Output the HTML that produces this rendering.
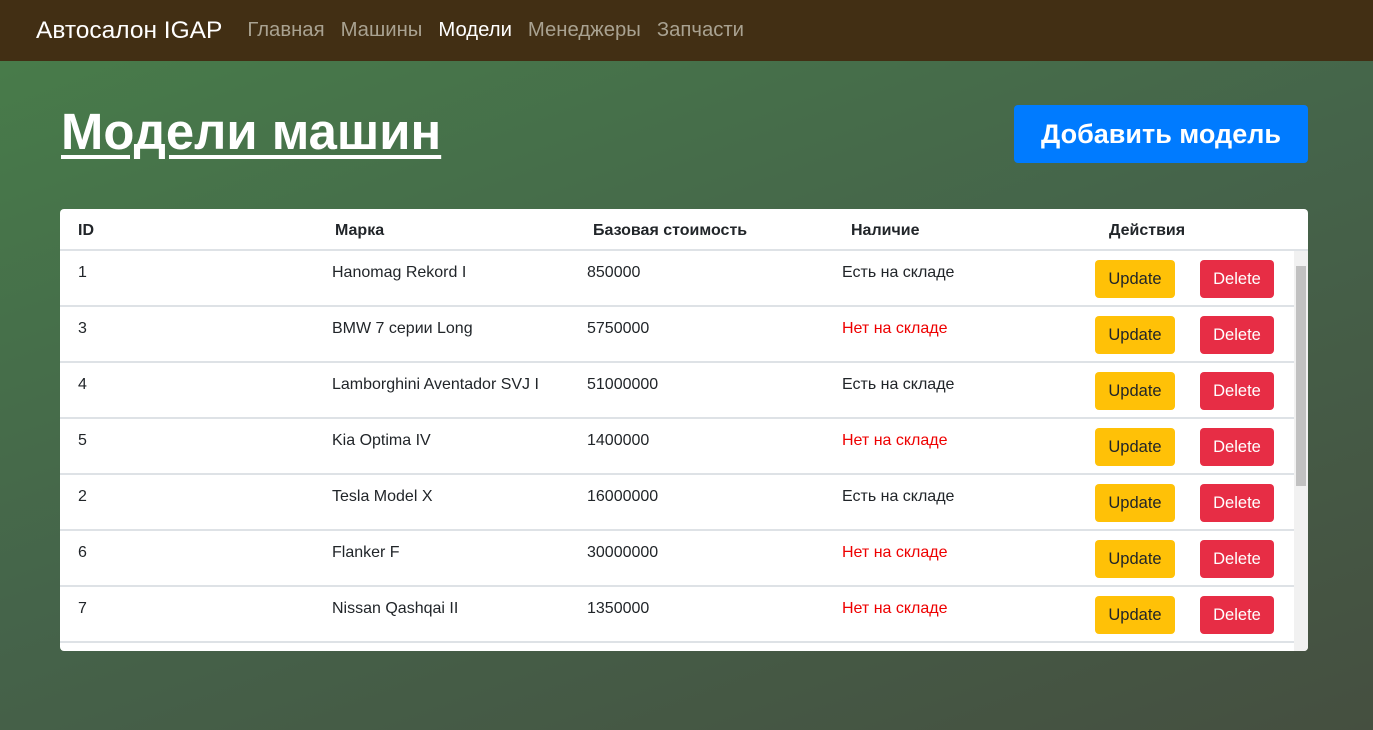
<!DOCTYPE html>
<html><head><meta charset="utf-8"><style>
*{box-sizing:border-box;margin:0;padding:0}
body{width:1373px;height:730px;overflow:hidden;font-family:"Liberation Sans","DejaVu Sans",sans-serif;background:linear-gradient(160deg,#487e4a 0%,#45644a 50%,#454f40 100%);position:relative}
nav{height:61px;background:#422f14;display:flex;align-items:center;padding-left:36px}
.brand{color:#fff;font-size:24.5px;margin-right:25px}
nav a{color:#a9a291;font-size:20.3px;margin-right:16px;text-decoration:none}
nav a.act{color:#fff}
h1{position:absolute;left:61px;top:102px;color:#fff;font-size:50.8px;font-weight:bold;text-decoration:underline;text-decoration-thickness:4px;text-underline-offset:6px}
.add{position:absolute;left:1014px;top:105px;width:294px;height:58px;background:#007bff;color:#fff;border-radius:4px;font-size:27px;font-weight:bold;display:flex;align-items:center;justify-content:center}
.tbl{position:absolute;left:60px;top:209px;width:1248px;height:442px;background:#fff;border-radius:4px;overflow:hidden}
.hd{height:42px;border-bottom:2px solid #dee2e6;position:relative;font-weight:bold;font-size:16px;color:#212529}
.hd span,.row span{position:absolute}
.row{height:56px;border-bottom:2px solid #dee2e6;position:relative;font-size:16px;color:#212529}
.row span{top:13px}
.red{color:#e00}
.b{position:absolute;top:9px;height:38px;border-radius:4px;display:flex;align-items:center;justify-content:center;font-size:16.5px}
.u{left:1035px;width:80px;background:#ffc107;color:#212529}
.d{left:1140px;width:74px;background:#e72d45;color:#fff}
.sb{position:absolute;left:1234px;top:42px;width:14px;height:400px;background:#f1f1f1}
.th{position:absolute;left:2px;top:15px;width:10px;height:220px;background:#c1c1c1}
</style></head><body>
<nav><span class="brand">Автосалон IGAP</span><a>Главная</a><a>Машины</a><a class="act">Модели</a><a>Менеджеры</a><a>Запчасти</a></nav>
<h1>Модели машин</h1>
<div class="add">Добавить модель</div>
<div class="tbl">
<div class="hd"><span style="left:18px;top:13px">ID</span><span style="left:275px;top:13px">Марка</span><span style="left:533px;top:13px">Базовая стоимость</span><span style="left:791px;top:13px">Наличие</span><span style="left:1049px;top:13px">Действия</span></div>
<div class="row"><span style="left:18px">1</span><span style="left:272px">Hanomag Rekord I</span><span style="left:527px">850000</span><span style="left:782px">Есть на складе</span><div class="b u">Update</div><div class="b d">Delete</div></div>
<div class="row"><span style="left:18px">3</span><span style="left:272px">BMW 7 серии Long</span><span style="left:527px">5750000</span><span style="left:782px" class="red">Нет на складе</span><div class="b u">Update</div><div class="b d">Delete</div></div>
<div class="row"><span style="left:18px">4</span><span style="left:272px">Lamborghini Aventador SVJ I</span><span style="left:527px">51000000</span><span style="left:782px">Есть на складе</span><div class="b u">Update</div><div class="b d">Delete</div></div>
<div class="row"><span style="left:18px">5</span><span style="left:272px">Kia Optima IV</span><span style="left:527px">1400000</span><span style="left:782px" class="red">Нет на складе</span><div class="b u">Update</div><div class="b d">Delete</div></div>
<div class="row"><span style="left:18px">2</span><span style="left:272px">Tesla Model X</span><span style="left:527px">16000000</span><span style="left:782px">Есть на складе</span><div class="b u">Update</div><div class="b d">Delete</div></div>
<div class="row"><span style="left:18px">6</span><span style="left:272px">Flanker F</span><span style="left:527px">30000000</span><span style="left:782px" class="red">Нет на складе</span><div class="b u">Update</div><div class="b d">Delete</div></div>
<div class="row"><span style="left:18px">7</span><span style="left:272px">Nissan Qashqai II</span><span style="left:527px">1350000</span><span style="left:782px" class="red">Нет на складе</span><div class="b u">Update</div><div class="b d">Delete</div></div>
<div class="sb"><div class="th"></div></div>
</div>
</body></html>
